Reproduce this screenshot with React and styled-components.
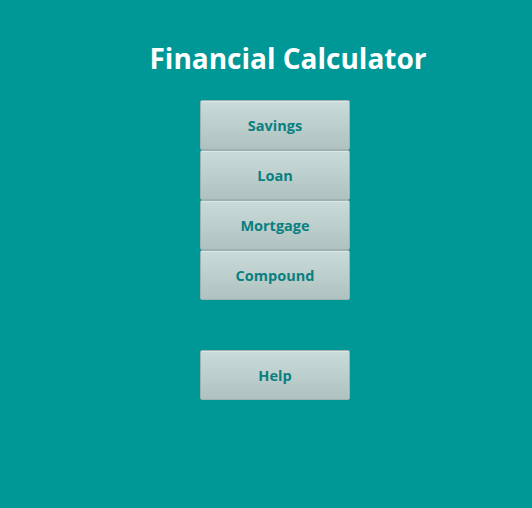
import styled, { createGlobalStyle } from "styled-components";

const GlobalStyle = createGlobalStyle`
  html, body {
    margin: 0;
    padding: 0;
    background: #009797;
  }
  body {
    font-family: "Open Sans", "Noto Sans", sans-serif;
  }
`;

const Page = styled.div`
  width: 532px;
  height: 508px;
  background-color: #009797;
  display: flex;
  flex-direction: column;
  padding-top: 38px;
  box-sizing: border-box;
`;

const Title = styled.h1`
  margin: 0 0 22px 0;
  padding-left: 44px;
  text-align: center;
  color: #ffffff;
  font-size: 28px;
  font-weight: 700;
  line-height: 40px;
`;

const Menu = styled.div`
  display: flex;
  flex-direction: column;
  margin-left: 200px;
  width: 150px;
`;

const MenuButton = styled.button`
  width: 150px;
  height: 50px;
  margin-top: ${({ $gap }) => ($gap ? "50px" : "0")};
  box-sizing: border-box;
  border: 1px solid #9fb2b1;
  border-radius: 2px;
  background: linear-gradient(to bottom, #c9dcda 0%, #b0c2c0 100%);
  box-shadow: inset 0 1px 0 #dbe8e6;
  color: #0a7f80;
  font-family: "Open Sans", "Noto Sans", sans-serif;
  font-size: 14.5px;
  font-weight: 700;
  cursor: pointer;
  padding: 0;
`;

const items = ["Savings", "Loan", "Mortgage", "Compound"];

export default function App() {
  return (
    <Page>
      <GlobalStyle />
      <Title>Financial Calculator</Title>
      <Menu>
        {items.map((label) => (
          <MenuButton key={label}>{label}</MenuButton>
        ))}
        <MenuButton $gap>Help</MenuButton>
      </Menu>
    </Page>
  );
}
